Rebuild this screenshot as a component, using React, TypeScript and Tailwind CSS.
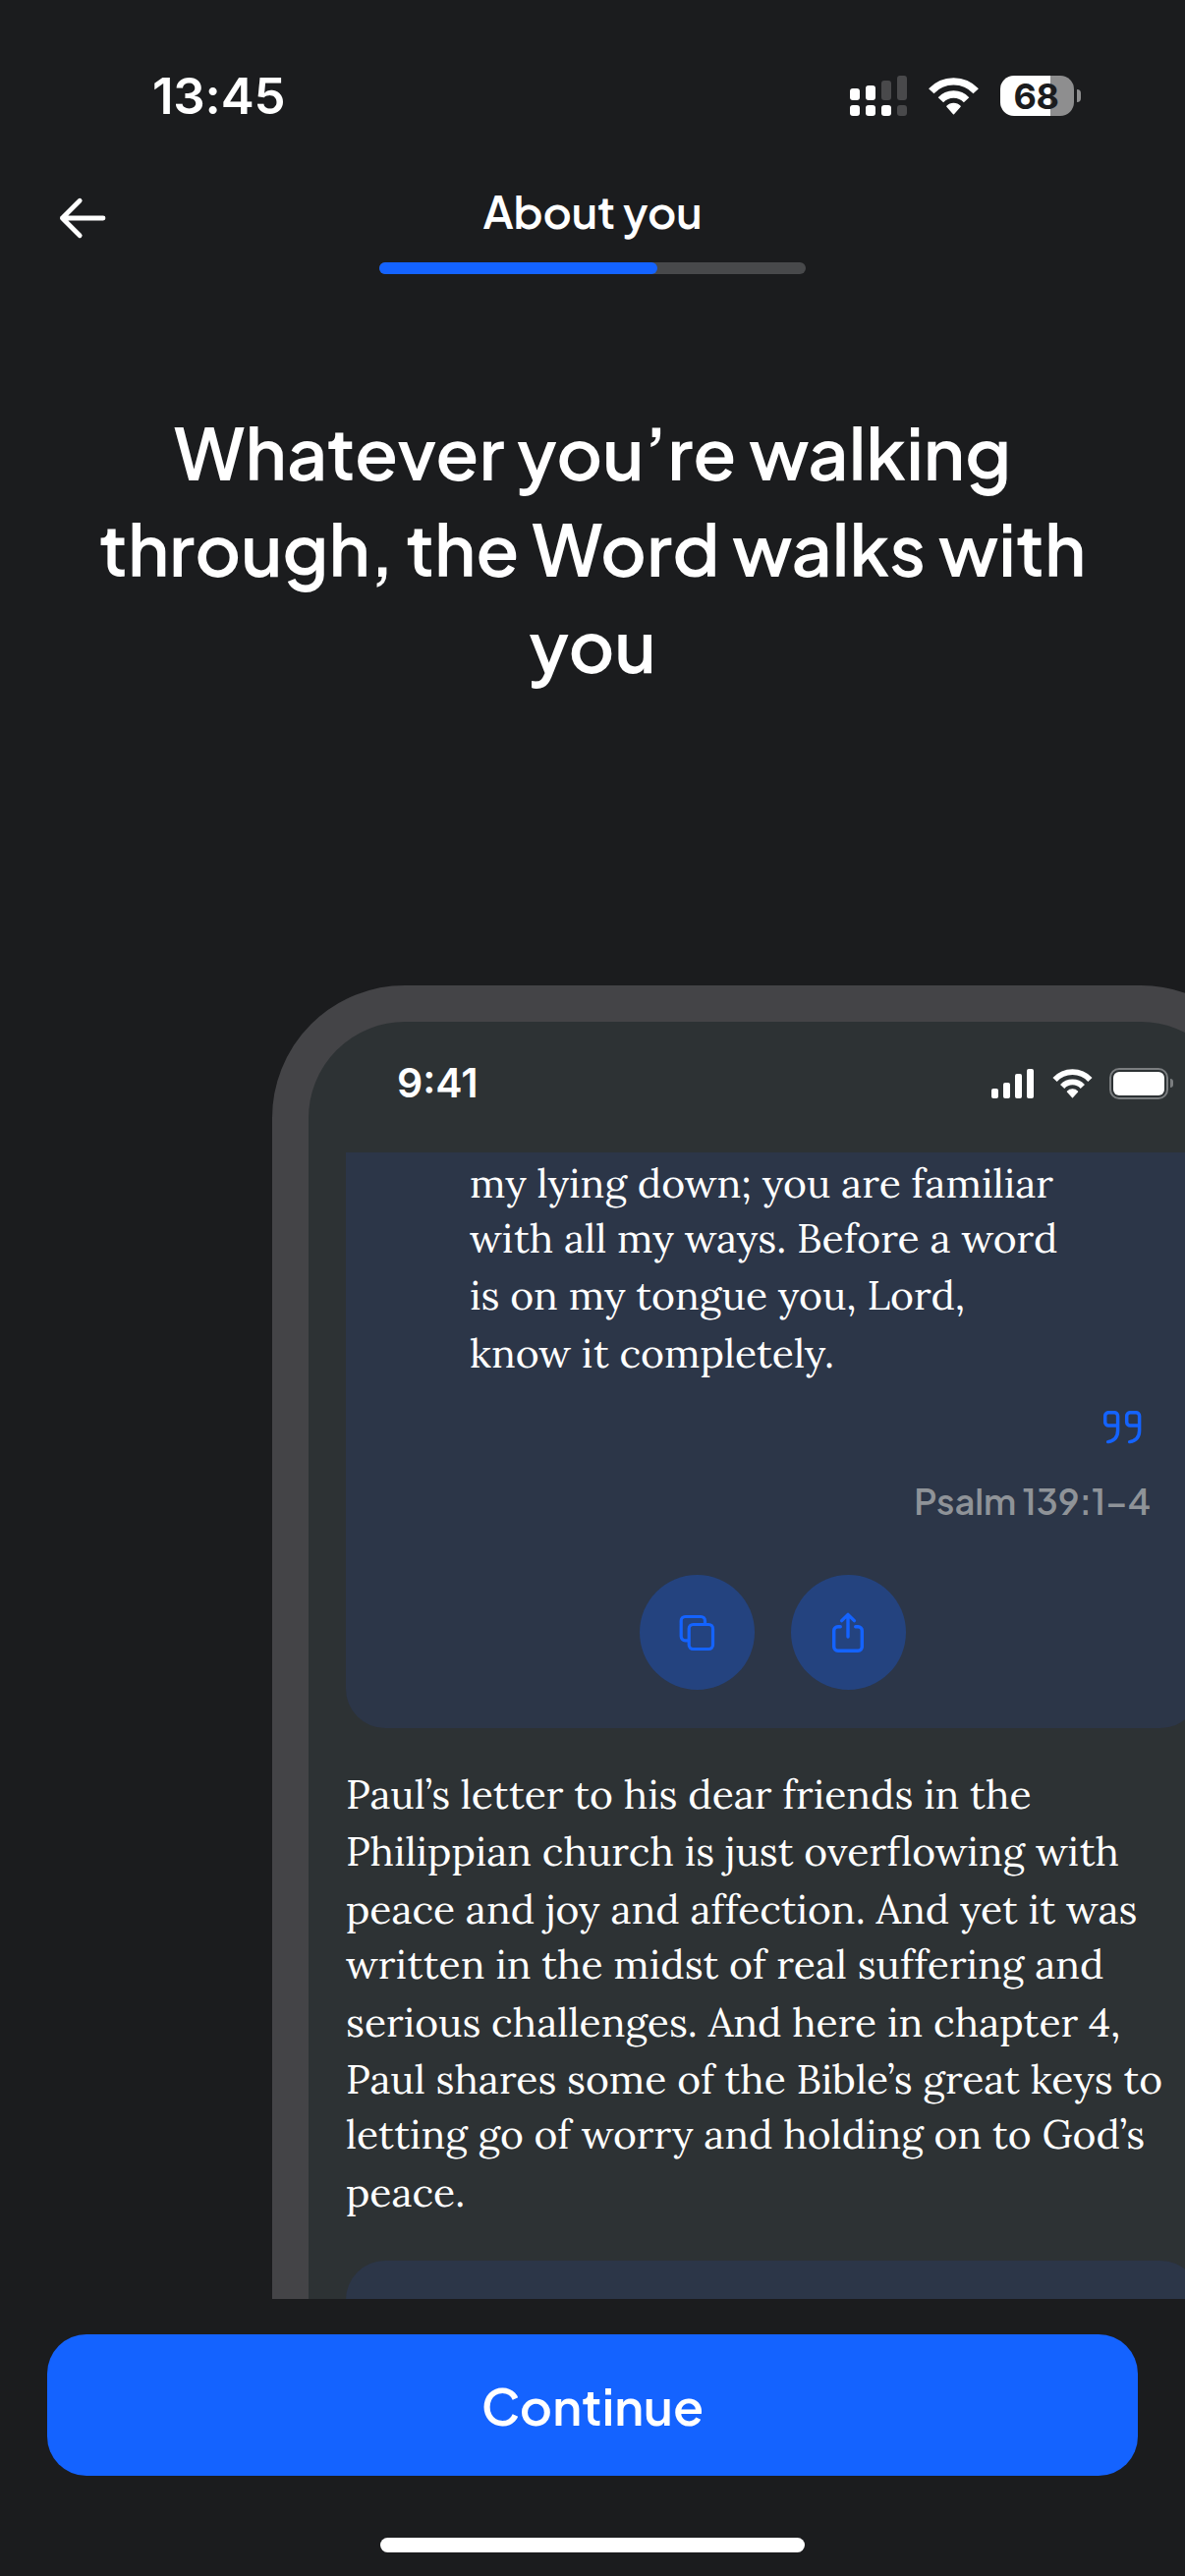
const verse = [
  { text: "my lying down; you are familiar", h: "h-[56px]" },
  { text: "with all my ways. Before a word", h: "h-[58px]" },
  { text: "is on my tongue you, Lord,", h: "h-[59px]" },
  { text: "know it completely.", h: "h-[58px]" },
];

const letter = [
  { text: "Paul’s letter to his dear friends in the", h: "h-[58px]" },
  { text: "Philippian church is just overflowing with", h: "h-[59px]" },
  { text: "peace and joy and affection. And yet it was", h: "h-[56px]" },
  { text: "written in the midst of real suffering and", h: "h-[59px]" },
  { text: "serious challenges. And here in chapter 4,", h: "h-[58px]" },
  { text: "Paul shares some of the Bible’s great keys to", h: "h-[56px]" },
  { text: "letting go of worry and holding on to God’s", h: "h-[59px]" },
  { text: "peace.", h: "h-[58px]" },
];

function Wifi({ className }: { className: string }) {
  return (
    <svg viewBox="0 0 51 38" fill="none" className={className}>
      <path d="M2.8 13.8A31 31 0 0 1 48.2 13.8" stroke="#fff" strokeWidth="7.4" />
      <path d="M12.4 22.7A17.9 17.9 0 0 1 38.6 22.7" stroke="#fff" strokeWidth="7.4" />
      <path d="M18.9 29.3A9 9 0 0 1 32.1 29.3L25.5 36.7Z" fill="#fff" stroke="#fff" strokeWidth="1.4" strokeLinejoin="round" />
    </svg>
  );
}

function StatusBar() {
  return (
    <div className="flex h-[156px] shrink-0 items-center justify-between pt-[39px] pr-[106px] pl-[155px]">
      <span className="font-['Inter',sans-serif] text-[51px] leading-none font-semibold tracking-[-0.2px]">13:45</span>
      <div className="flex items-center">
        <div className="grid h-[41px] grid-cols-4 gap-x-[6px]">
          <div className="flex w-[10px] flex-col justify-end gap-[5px]">
            <i className="h-[12px] rounded-[3px] bg-white" />
            <i className="h-[11px] rounded-[3px] bg-white" />
          </div>
          <div className="flex w-[10px] flex-col justify-end gap-[5px]">
            <i className="h-[15px] rounded-[3px] bg-white" />
            <i className="h-[11px] rounded-[3px] bg-white" />
          </div>
          <div className="flex w-[10px] flex-col justify-end gap-[5px]">
            <i className="h-[20px] rounded-[3px] bg-[#49494b]" />
            <i className="h-[11px] rounded-[3px] bg-white" />
          </div>
          <div className="flex w-[10px] flex-col justify-end gap-[5px]">
            <i className="h-[25px] rounded-[3px] bg-[#49494b]" />
            <i className="h-[11px] rounded-[3px] bg-[#49494b]" />
          </div>
        </div>
        <Wifi className="ml-[22px] h-[38px] w-[51px]" />
        <div className="ml-[22px] flex h-[41px] w-[75px] items-center justify-center rounded-[14px] bg-[linear-gradient(90deg,#fff_0,#fff_51px,#8e8e8f_51px)] pr-[2px]">
          <span className="font-['Inter',sans-serif] text-[36px] leading-none font-bold tracking-[-0.5px] text-[#1b1c1e]">68</span>
        </div>
        <i className="ml-[3px] h-[13px] w-[4px] rounded-r-full bg-[#8e8e8f]" />
      </div>
    </div>
  );
}

function PhoneStatus() {
  return (
    <div className="flex h-[133px] items-center pb-[8px] pl-[90px]">
      <span className="w-[605px] font-['Inter',sans-serif] text-[41px] leading-none font-semibold">9:41</span>
      <div className="flex h-[30px] items-end gap-[5px]">
        <i className="h-[10px] w-[7px] rounded-[2px] bg-white" />
        <i className="h-[16px] w-[7px] rounded-[2px] bg-white" />
        <i className="h-[25px] w-[7px] rounded-[2px] bg-white" />
        <i className="h-[30px] w-[7px] rounded-[2px] bg-white" />
      </div>
      <Wifi className="ml-[19px] h-[30px] w-[41px]" />
      <div className="ml-[17px] h-[32px] w-[60px] rounded-[10px] border-2 border-[#7b7e80] p-[2px]">
        <div className="h-full rounded-[6px] bg-white" />
      </div>
      <i className="ml-[2px] h-[9px] w-[3px] rounded-r-full bg-[#7b7e80]" />
    </div>
  );
}

function QuoteCard() {
  return (
    <section className="flex h-[586px] w-[869px] flex-col rounded-b-[40px] bg-[#2c3648] pt-[2px]">
      <div className="pl-[126px] font-['Lora','Liberation_Serif',serif] text-[40.9px] leading-[58px]">
        {verse.map((l) => (
          <p key={l.text} className={`whitespace-nowrap ${l.h}`}>{l.text}</p>
        ))}
      </div>
      <svg viewBox="0 0 39 34" fill="none" stroke="#1463ff" strokeWidth="3.5" strokeLinecap="round" strokeLinejoin="round" className="mt-[30px] mr-[59px] h-[34px] w-[39px] self-end">
        <path d="M14.6 15H5.2a3.5 3.5 0 0 1-3.5-3.5V5.2a3.5 3.5 0 0 1 3.5-3.5h5.9a3.5 3.5 0 0 1 3.5 3.5V20c0 6.5-4 10.5-9.9 11.6" />
        <path d="M36.6 15h-9.4a3.5 3.5 0 0 1-3.5-3.5V5.2a3.5 3.5 0 0 1 3.5-3.5h5.9a3.5 3.5 0 0 1 3.5 3.5V20c0 6.5-4 10.5-9.9 11.6" />
      </svg>
      <p className="mt-[34px] mr-[50px] self-end text-[36.1px] leading-[48px] font-semibold text-[#8f9398]">Psalm 139:1–4</p>
      <div className="mt-[51px] flex justify-center gap-[37px] pr-px">
        <button className="flex size-[117px] items-center justify-center rounded-full bg-[#24437f]">
          <svg viewBox="0 0 37 38" fill="none" stroke="#1463ff" strokeWidth="3.2" strokeLinecap="round" className="h-[38px] w-[37px]">
            <rect x="10.2" y="10.5" width="24.3" height="25" rx="4.2" />
            <path d="M9.4 26.8H6.4a4.2 4.2 0 0 1-4.2-4.2V6.7a4.2 4.2 0 0 1 4.2-4.2h15.9a4.2 4.2 0 0 1 4.2 4.2v3" />
          </svg>
        </button>
        <button className="flex size-[117px] items-center justify-center rounded-full bg-[#24437f]">
          <svg viewBox="0 0 32 41" fill="none" stroke="#1463ff" strokeWidth="3.4" strokeLinecap="round" strokeLinejoin="round" className="h-[41px] w-[32px]">
            <path d="M8.3 14.7H5.7a4 4 0 0 0-4 4v16.6a4 4 0 0 0 4 4h20.6a4 4 0 0 0 4-4V18.7a4 4 0 0 0-4-4h-2.6" />
            <path d="M16 25V2.6M9.6 8.6L16 2.4l6.4 6.2" />
          </svg>
        </button>
      </div>
    </section>
  );
}

export default function App() {
  return (
    <main className="flex h-[2622px] w-[1206px] flex-col overflow-hidden bg-[#1b1c1e] font-['Plus_Jakarta_Sans','Inter',sans-serif] text-white">
      <StatusBar />
      <header className="flex justify-between px-[60px] pt-[29px]">
        <button className="mt-[13px] size-[48px]">
          <svg viewBox="0 0 48 48" fill="none" stroke="#fff" strokeWidth="4.8" strokeLinecap="round" strokeLinejoin="round" className="size-[48px]">
            <path d="M45 24H3.4M21.2 6.3L3.4 24l17.8 17.7" />
          </svg>
        </button>
        <div className="w-[434px]">
          <p className="text-center text-[45px] leading-[60px] font-semibold tracking-[-0.1px]">About you</p>
          <div className="mt-[22px] h-[12px] overflow-hidden rounded-full bg-[#48494b]">
            <div className="h-full w-[283px] rounded-r-full bg-[#1463ff]" />
          </div>
        </div>
        <div className="w-[48px]" />
      </header>
      <h1 className="mt-[132px] px-[72px] text-center text-[72px] leading-[98px] font-semibold">
        Whatever you’re walking
        <br />
        through, the Word walks with
        <br />
        you
      </h1>
      <div className="mt-[298px] ml-[277px] h-[1337px] w-[929px] shrink-0 overflow-hidden">
        <div className="h-[1500px] w-[1019px] rounded-[135px] border-[37px] border-[#444447] bg-[#2d3234]">
          <PhoneStatus />
          <div className="pl-[38px]">
            <QuoteCard />
            <div className="mt-[38px] font-['Lora','Liberation_Serif',serif] text-[40.85px] leading-[58px]">
              {letter.map((l) => (
                <p key={l.text} className={`whitespace-nowrap ${l.h}`}>{l.text}</p>
              ))}
            </div>
            <div className="mt-[41px] h-[200px] w-[869px] rounded-[40px] bg-[#2c3648]" />
          </div>
        </div>
      </div>
      <footer className="flex flex-col items-center px-[48px] pt-[36px]">
        <button className="h-[144px] w-full rounded-[40px] bg-[#1463ff] text-[51px] leading-none font-semibold">Continue</button>
        <div className="mt-[63px] h-[15px] w-[432px] rounded-full bg-white" />
      </footer>
    </main>
  );
}
